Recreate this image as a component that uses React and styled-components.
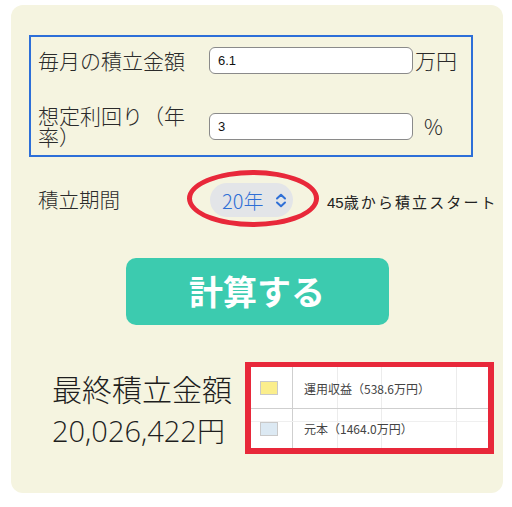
import React from "react";
import styled, { createGlobalStyle } from "styled-components";

const Global = createGlobalStyle`
  html, body { margin: 0; padding: 0; background: #ffffff; }
  body { font-family: "Noto Sans CJK JP", "Noto Sans", sans-serif; color: #222; font-weight: 300; }
`;

const Card = styled.div`
  box-sizing: border-box;
  width: 492px;
  height: 488px;
  margin: 5px 0 0 11px;
  background: #f5f4e0;
  border-radius: 12px;
  padding: 30px 0 0 0;
`;

const InputBox = styled.div`
  box-sizing: border-box;
  width: 444px;
  margin-left: 18px;
  border: 2px solid #2d6fd8;
  padding: 10px 0 8px 7px;
  display: flex;
  flex-direction: column;
  gap: 31px;
`;

const FieldRow = styled.div`
  display: flex;
  align-items: center;
`;

const FieldLabel = styled.div`
  width: 171px;
  padding-right: 16px;
  box-sizing: border-box;
  font-size: 21px;
  line-height: 21px;
  color: #2a2a2a;
`;

const TextInput = styled.div`
  box-sizing: border-box;
  width: 204px;
  height: 27px;
  background: #fff;
  border: 1px solid #8a8a8a;
  border-radius: 6px;
  padding-left: 8px;
  display: flex;
  align-items: center;
  font-family: "Liberation Sans", Arial, sans-serif;
  font-weight: 400;
  font-size: 13px;
  color: #111;
`;

const Unit = styled.div`
  margin-left: ${(p) => p.$offset}px;
  font-size: 21px;
  line-height: 27px;
  color: #2a2a2a;
`;

const PeriodRow = styled.div`
  display: flex;
  align-items: center;
  margin-top: 26px;
  padding-left: 27px;
  height: 34px;
`;

const PeriodLabel = styled.div`
  width: 172px;
  font-size: 20.5px;
  color: #2a2a2a;
  margin-top: -3px;
`;

const SelectWrap = styled.div`
  position: relative;
  width: 83px;
  height: 34px;
`;

const SelectPill = styled.div`
  box-sizing: border-box;
  width: 83px;
  height: 34px;
  border-radius: 17px;
  background: #e3e5e8;
  display: flex;
  align-items: center;
  padding-left: 12px;
  gap: 12px;
  color: #2f6fd6;
  font-size: 20px;
`;

const Ring = styled.div`
  position: absolute;
  left: -23px;
  top: -13px;
  width: 132px;
  height: 57px;
  box-sizing: border-box;
  border: 5px solid #e8283a;
  border-radius: 50%;
  pointer-events: none;
`;

const Note = styled.div`
  margin-left: 34px;
  margin-top: 3px;
  font-size: 15px;
  font-weight: 400;
  color: #222;
  white-space: nowrap;
  letter-spacing: 2.1px;
`;

const NoteNum = styled.span`
  font-family: "Liberation Sans", Arial, sans-serif;
  letter-spacing: 0;
`;

const CalcButton = styled.button`
  display: flex;
  align-items: center;
  justify-content: center;
  width: 263px;
  height: 67px;
  margin: 41px auto 0 auto;
  border: none;
  border-radius: 10px;
  background: #3ccbaf;
  color: #fff;
  font-family: "Noto Sans CJK JP", sans-serif;
  font-weight: 700;
  font-size: 34px;
  padding: 0 0 3px 0;
`;

const ResultRow = styled.div`
  display: flex;
  align-items: center;
  margin-top: 37px;
  padding-left: 41px;
`;

const ResultText = styled.div`
  width: 193px;
  display: flex;
  flex-direction: column;
`;

const ResultTitle = styled.div`
  font-size: 30px;
  line-height: 36px;
  color: #1e1e1e;
`;

const ResultValue = styled.div`
  font-size: 29px;
  line-height: 32px;
  margin-top: 8px;
  color: #1e1e1e;
  font-family: "Open Sans", "Noto Sans CJK JP", sans-serif;
  font-weight: 300;
`;

const Yen = styled.span`
  font-family: "Noto Sans CJK JP", sans-serif;
  font-weight: 300;
  font-size: 28px;
`;

const Legend = styled.div`
  position: relative;
  box-sizing: border-box;
  width: 249px;
  height: 92px;
  border: 5px solid #e8283a;
  border-left-width: 6px;
  border-right-width: 6px;
  border-bottom-width: 6px;
  background: #fff;
  display: flex;
  flex-direction: column;
  overflow: hidden;
`;

const GridLine = styled.div`
  position: absolute;
  top: 0;
  bottom: 0;
  left: ${(p) => p.$x}px;
  width: 1px;
  background: ${(p) => (p.$strong ? "#cfcfcf" : "#ececec")};
`;

const HLine = styled.div`
  position: absolute;
  left: 0;
  right: 0;
  top: ${(p) => p.$y}px;
  height: 1px;
  background: ${(p) => (p.$strong ? "#cfcfcf" : "#efefef")};
`;

const LegendRow = styled.div`
  position: relative;
  display: flex;
  align-items: center;
  height: ${(p) => p.$h}px;
`;

const Swatch = styled.div`
  box-sizing: border-box;
  width: 18px;
  height: 14px;
  margin-left: 9px;
  background: ${(p) => p.$color};
  border: 1px solid #c9c9c9;
`;

const LegendText = styled.div`
  margin-left: 26px;
  font-size: 12px;
  font-weight: 400;
  color: #444;
  white-space: nowrap;
`;

const Chevrons = () => (
  <svg width="12" height="15" viewBox="0 0 12 15" fill="none">
    <path d="M2 5.5 L6 1.8 L10 5.5" stroke="#2f6fd6" strokeWidth="2" strokeLinecap="round" strokeLinejoin="round" />
    <path d="M2 9.5 L6 13.2 L10 9.5" stroke="#2f6fd6" strokeWidth="2" strokeLinecap="round" strokeLinejoin="round" />
  </svg>
);

export default function App() {
  return (
    <>
      <Global />
      <Card>
        <InputBox>
          <FieldRow>
            <FieldLabel>毎月の積立金額</FieldLabel>
            <TextInput>6.1</TextInput>
            <Unit $offset={2}>万円</Unit>
          </FieldRow>
          <FieldRow>
            <FieldLabel>想定利回り（年率）</FieldLabel>
            <TextInput>3</TextInput>
            <Unit $offset={11}>%</Unit>
          </FieldRow>
        </InputBox>

        <PeriodRow>
          <PeriodLabel>積立期間</PeriodLabel>
          <SelectWrap>
            <SelectPill>
              <span>20年</span>
              <Chevrons />
            </SelectPill>
            <Ring />
          </SelectWrap>
          <Note>
            <NoteNum>45</NoteNum>歳から積立スタート
          </Note>
        </PeriodRow>

        <CalcButton>計算する</CalcButton>

        <ResultRow>
          <ResultText>
            <ResultTitle>最終積立金額</ResultTitle>
            <ResultValue>
              20,026,422<Yen>円</Yen>
            </ResultValue>
          </ResultText>
          <Legend>
            <GridLine $x={41} $strong />
            <GridLine $x={86} />
            <GridLine $x={130} />
            <GridLine $x={205} />
            <HLine $y={54} />
            <LegendRow $h={42}>
              <Swatch $color="#fbee8c" />
              <LegendText>運用収益（538.6万円）</LegendText>
            </LegendRow>
            <HLine $y={41} $strong />
            <LegendRow $h={39}>
              <Swatch $color="#dce9f3" />
              <LegendText>元本（1464.0万円）</LegendText>
            </LegendRow>
          </Legend>
        </ResultRow>
      </Card>
    </>
  );
}
